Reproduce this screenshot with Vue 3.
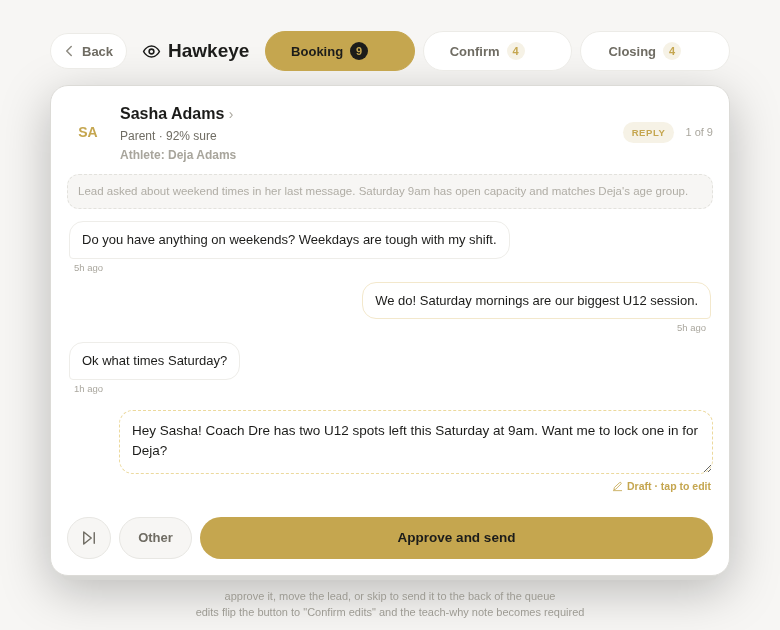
<script setup>
import { ref } from 'vue'

const tabs = [
  { name: 'Booking', count: 9, active: true },
  { name: 'Confirm', count: 4 },
  { name: 'Closing', count: 4 }
]

const messages = [
  { id: 1, text: 'Do you have anything on weekends? Weekdays are tough with my shift.', time: '5h ago', mine: false },
  { id: 2, text: 'We do! Saturday mornings are our biggest U12 session.', time: '5h ago', mine: true },
  { id: 3, text: 'Ok what times Saturday?', time: '1h ago', mine: false }
]

const draft = ref('Hey Sasha! Coach Dre has two U12 spots left this Saturday at 9am. Want me to lock one in for Deja?')
</script>

<template>
  <div class="page">
    <header class="topbar">
      <button class="back">
        <svg class="back__icon" width="18" height="18" viewBox="0 0 24 24" fill="none" stroke="currentColor" stroke-width="2" stroke-linecap="round" stroke-linejoin="round"><path d="M15 18l-6-6 6-6" /></svg>
        Back
      </button>
      <div class="brand">
        <svg width="19" height="19" viewBox="0 0 24 24" fill="none" stroke="currentColor" stroke-width="2" stroke-linecap="round" stroke-linejoin="round"><path d="M2 12s3.6-7 10-7 10 7 10 7-3.6 7-10 7-10-7-10-7z" /><circle cx="12" cy="12" r="3" /></svg>
        <span>Hawkeye</span>
      </div>
      <nav class="tabs">
        <button v-for="tab in tabs" :key="tab.name" class="tab" :class="{ 'tab--active': tab.active }">
          {{ tab.name }}
          <span class="tab__count">{{ tab.count }}</span>
        </button>
      </nav>
    </header>

    <main class="card">
      <section class="lead">
        <div class="lead__avatar">SA</div>
        <div class="lead__info">
          <div class="lead__name">Sasha Adams <span class="lead__chev">›</span></div>
          <div class="lead__meta">Parent · 92% sure</div>
          <div class="lead__athlete">Athlete: Deja Adams</div>
        </div>
        <span class="pill">REPLY</span>
        <span class="position">1 of 9</span>
      </section>

      <p class="insight">Lead asked about weekend times in her last message. Saturday 9am has open capacity and matches Deja's age group.</p>

      <section class="thread">
        <div v-for="msg in messages" :key="msg.id" class="msg" :class="{ 'msg--mine': msg.mine }">
          <div class="msg__bubble">{{ msg.text }}</div>
          <div class="msg__time">{{ msg.time }}</div>
        </div>
      </section>

      <section class="draft">
        <textarea v-model="draft" class="draft__input" rows="2"></textarea>
        <div class="draft__hint">
          <svg width="11" height="11" viewBox="0 0 24 24" fill="none" stroke="currentColor" stroke-width="1.8" stroke-linecap="round" stroke-linejoin="round"><path d="M3 21h18" /><path d="M16.5 3.5a2.1 2.1 0 0 1 3 3L8 18l-4 1 1-4z" /></svg>
          Draft · tap to edit
        </div>
      </section>

      <footer class="actions">
        <button class="skip" aria-label="Skip">
          <svg width="18" height="18" viewBox="0 0 24 24" fill="none" stroke="currentColor" stroke-width="1.9" stroke-linecap="round" stroke-linejoin="round"><path d="M5 4l10 8-10 8z" /><path d="M19 5v14" /></svg>
        </button>
        <button class="other">Other</button>
        <button class="approve">Approve and send</button>
      </footer>
    </main>

    <div class="note">
      <div>approve it, move the lead, or skip to send it to the back of the queue</div>
      <div>edits flip the button to "Confirm edits" and the teach-why note becomes required</div>
    </div>
  </div>
</template>

<style>
html, body {
  background: #f7f6f4;
}
</style>

<style scoped>
.page {
  width: 780px;
  height: 630px;
  box-sizing: border-box;
  padding: 31px 50px 0;
  font-family: "Liberation Sans", Arial, sans-serif;
  color: #1c1c1a;
  will-change: transform;
  overflow: hidden;
}

button,
textarea {
  font-family: inherit;
}

button {
  cursor: pointer;
}

.topbar {
  display: flex;
  align-items: center;
  height: 40px;
}

.back {
  display: flex;
  align-items: center;
  gap: 4px;
  width: 77px;
  height: 36px;
  padding: 0 0 0 9px;
  border: 1px solid #ecebe7;
  border-radius: 18px;
  background: #fff;
  color: #6f6c63;
  font-size: 13px;
  font-weight: 700;
}

.back__icon {
  color: #8e8b82;
}

.brand {
  display: flex;
  align-items: center;
  gap: 7px;
  margin-left: 15px;
  font-size: 19px;
  font-weight: 700;
}

.tabs {
  flex: 1;
  display: flex;
  gap: 8px;
  margin-left: 16px;
}

.tab {
  flex: 1;
  display: flex;
  align-items: center;
  justify-content: center;
  gap: 7px;
  height: 40px;
  padding: 0 21px 0 0;
  border: 1px solid #ecebe7;
  border-radius: 20px;
  background: #fff;
  color: #6f6c63;
  font-size: 13px;
  font-weight: 700;
}

.tab--active {
  border-color: #c5a64f;
  background: #c5a64f;
  color: #1c1c1a;
}

.tab__count {
  display: flex;
  align-items: center;
  justify-content: center;
  width: 18px;
  height: 18px;
  border-radius: 50%;
  background: #f6f2e6;
  color: #c5a64f;
  font-size: 11px;
}

.tab--active .tab__count {
  background: #1c1c1a;
  color: #c5a64f;
}

.card {
  height: 491px;
  box-sizing: border-box;
  margin-top: 14px;
  padding: 0 16px;
  border: 1px solid #dcdbd7;
  border-radius: 18px;
  background: #fff;
  box-shadow: 0 16px 0 -12px #d6d6d3, 0 14px 50px rgba(0, 0, 0, 0.26);
}

.lead {
  display: flex;
  align-items: center;
  box-sizing: border-box;
  height: 88px;
  padding-top: 4px;
}

.lead__avatar {
  width: 42px;
  margin-right: 11px;
  text-align: center;
  color: #c5a64f;
  font-size: 14px;
  font-weight: 700;
}

.lead__info {
  flex: 1;
  padding-top: 4px;
}

.lead__name {
  font-size: 16px;
  font-weight: 700;
  line-height: 20px;
}

.lead__chev {
  color: #aaa79e;
  font-size: 14px;
  font-weight: 400;
}

.lead__meta {
  margin-top: 3px;
  color: #6f6c63;
  font-size: 12px;
  line-height: 19px;
}

.lead__athlete {
  color: #a8a59c;
  font-size: 12px;
  font-weight: 700;
  line-height: 19px;
}

.pill {
  padding: 0 9px;
  border-radius: 11px;
  background: #f6f2e6;
  color: #c5a64f;
  font-size: 9.5px;
  font-weight: 700;
  letter-spacing: 0.6px;
  line-height: 21px;
}

.position {
  margin-left: 11px;
  color: #aaa79e;
  font-size: 11px;
}

.insight {
  margin: 0;
  padding: 0 10px;
  border: 1px dashed #e3e2dd;
  border-radius: 12px;
  background: #f7f6f4;
  color: #b0ada5;
  font-size: 11.5px;
  line-height: 33px;
}

.thread {
  display: flex;
  flex-direction: column;
  gap: 8px;
  margin-top: 12px;
  padding: 0 2px;
}

.msg {
  display: flex;
  flex-direction: column;
  align-items: flex-start;
}

.msg--mine {
  align-items: flex-end;
}

.msg__bubble {
  padding: 9px 12px;
  border: 1px solid #eeede9;
  border-radius: 14px 14px 14px 4px;
  font-size: 13px;
  line-height: 1.35;
}

.msg--mine .msg__bubble {
  border-color: #f3e8cc;
  border-radius: 14px 14px 4px 14px;
}

.msg__time {
  margin-top: 3px;
  padding: 0 5px;
  color: #aaa79e;
  font-size: 9.5px;
  line-height: 12px;
}

.draft {
  display: flex;
  flex-direction: column;
  align-items: flex-end;
  margin-top: 15px;
  padding-left: 52px;
}

.draft__input {
  display: block;
  width: 100%;
  height: 64px;
  box-sizing: border-box;
  padding: 10px 12px;
  border: 1px dashed #ecd99d;
  border-radius: 14px;
  outline: none;
  color: #1c1c1a;
  font-size: 13.5px;
  line-height: 1.5;
}

.draft__hint {
  display: flex;
  align-items: center;
  gap: 4px;
  margin-top: 6px;
  padding-right: 2px;
  color: #c5a64f;
  font-size: 10.5px;
  font-weight: 700;
  line-height: 13px;
}

.actions {
  display: flex;
  gap: 8px;
  margin-top: 24px;
}

.skip {
  display: flex;
  align-items: center;
  justify-content: center;
  width: 44px;
  height: 42px;
  padding: 0;
  border: 1px solid #e8e7e3;
  border-radius: 21px;
  background: #f7f6f4;
  color: #6f6c63;
}

.other {
  width: 73px;
  height: 42px;
  padding: 0;
  border: 1px solid #e8e7e3;
  border-radius: 21px;
  background: #f7f6f4;
  color: #6f6c63;
  font-size: 13px;
  font-weight: 700;
}

.approve {
  flex: 1;
  height: 42px;
  border: none;
  border-radius: 21px;
  background: #c5a64f;
  color: #1c1c1a;
  font-size: 13.5px;
  font-weight: 700;
}

.note {
  margin-top: 12px;
  color: #9c9a92;
  font-size: 11px;
  line-height: 16px;
  text-align: center;
}
</style>
